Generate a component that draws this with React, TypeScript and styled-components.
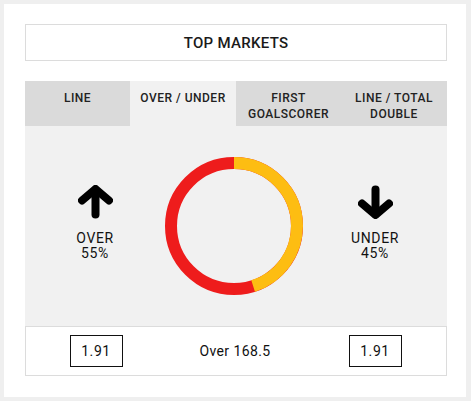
import React from "react";
import styled, { createGlobalStyle } from "styled-components";

const Global = createGlobalStyle`
  html, body { margin: 0; padding: 0; background: #efefef; }
  body { font-family: Roboto, "Liberation Sans", Arial, sans-serif; color: #111; }
  * { box-sizing: border-box; }
`;

const Page = styled.div`
  padding: 4px 5px 5px 4px;
`;

const Card = styled.div`
  background: #fff;
  width: 462px;
  padding: 20px 19px 21px 21px;
  display: flex;
  flex-direction: column;
`;

const TitleBox = styled.div`
  height: 37px;
  border: 1px solid #dcdcdc;
  display: flex;
  align-items: center;
  justify-content: center;
  font-size: 15px;
  font-weight: 500;
  letter-spacing: 0.3px;
  color: #1a1a1a;
  margin-bottom: 20px;
`;

const Tabs = styled.div`
  display: grid;
  grid-template-columns: 105px 106px 105px 106px;
`;

const Tab = styled.div<{ $active?: boolean }>`
  height: 45px;
  padding: 9px 4px 4px;
  background: ${(p) => (p.$active ? "#f1f1f1" : "#dadada")};
  text-align: center;
  font-size: 12px;
  line-height: 16px;
  font-weight: 500;
  letter-spacing: 0.5px;
  color: #222;
`;

const Content = styled.div`
  height: 200px;
  background: #f1f1f1;
  display: grid;
  grid-template-columns: 140px 138px 1fr;
  align-items: center;
`;

const Side = styled.div`
  display: flex;
  flex-direction: column;
  align-items: center;
  padding-bottom: 6px;
`;

const LabelLine = styled.div<{ $first?: boolean }>`
  margin-top: ${(p) => (p.$first ? "11px" : "-1px")};
  font-size: 14px;
  line-height: 16px;
  text-align: center;
  color: #111;
  letter-spacing: 0.6px;
`;

const DonutWrap = styled.div`
  width: 138px;
  height: 138px;
`;

const Row = styled.div`
  height: 50px;
  border: 1px solid #dcdcdc;
  display: grid;
  grid-template-columns: 140px 138px 1fr;
  align-items: center;
  justify-items: center;
`;

const Odds = styled.div`
  width: 53px;
  height: 32px;
  border: 1px solid #111;
  display: flex;
  align-items: center;
  justify-content: center;
  font-size: 14px;
  letter-spacing: 0.6px;
  color: #111;
`;

const Mid = styled.div`
  font-size: 14px;
  letter-spacing: 0.4px;
  color: #111;
`;

const Arrow = ({ down }: { down?: boolean }) => (
  <svg width="35" height="34" viewBox="0 0 35 34" style={down ? { transform: "rotate(180deg)" } : undefined}>
    <g fill="none" stroke="#000" strokeWidth="8" strokeLinecap="round" strokeLinejoin="round">
      <polyline points="4,15.5 17.5,4 31,15.5" />
      <line x1="17.5" y1="5" x2="17.5" y2="29.5" />
    </g>
  </svg>
);

const Donut = ({ under }: { under: number }) => {
  const r = 63;
  const c = 2 * Math.PI * r;
  const y = c * under;
  return (
    <svg width="138" height="138" viewBox="0 0 138 138">
      <g transform="rotate(-90 69 69)">
        <circle cx="69" cy="69" r={r} fill="none" stroke="#ee1c1c" strokeWidth="12" />
        <circle
          cx="69"
          cy="69"
          r={r}
          fill="none"
          stroke="#fdbd12"
          strokeWidth="12"
          strokeDasharray={`${y} ${c}`}
        />
      </g>
    </svg>
  );
};

export default function App() {
  return (
    <>
      <Global />
      <Page>
        <Card>
          <TitleBox>TOP MARKETS</TitleBox>
          <Tabs>
            <Tab>LINE</Tab>
            <Tab $active>OVER / UNDER</Tab>
            <Tab>FIRST<br />GOALSCORER</Tab>
            <Tab>LINE / TOTAL<br />DOUBLE</Tab>
          </Tabs>
          <Content>
            <Side>
              <Arrow />
              <LabelLine $first>OVER</LabelLine>
              <LabelLine>55%</LabelLine>
            </Side>
            <DonutWrap>
              <Donut under={0.45} />
            </DonutWrap>
            <Side>
              <Arrow down />
              <LabelLine $first>UNDER</LabelLine>
              <LabelLine>45%</LabelLine>
            </Side>
          </Content>
          <Row>
            <Odds>1.91</Odds>
            <Mid>Over 168.5</Mid>
            <Odds>1.91</Odds>
          </Row>
        </Card>
      </Page>
    </>
  );
}
